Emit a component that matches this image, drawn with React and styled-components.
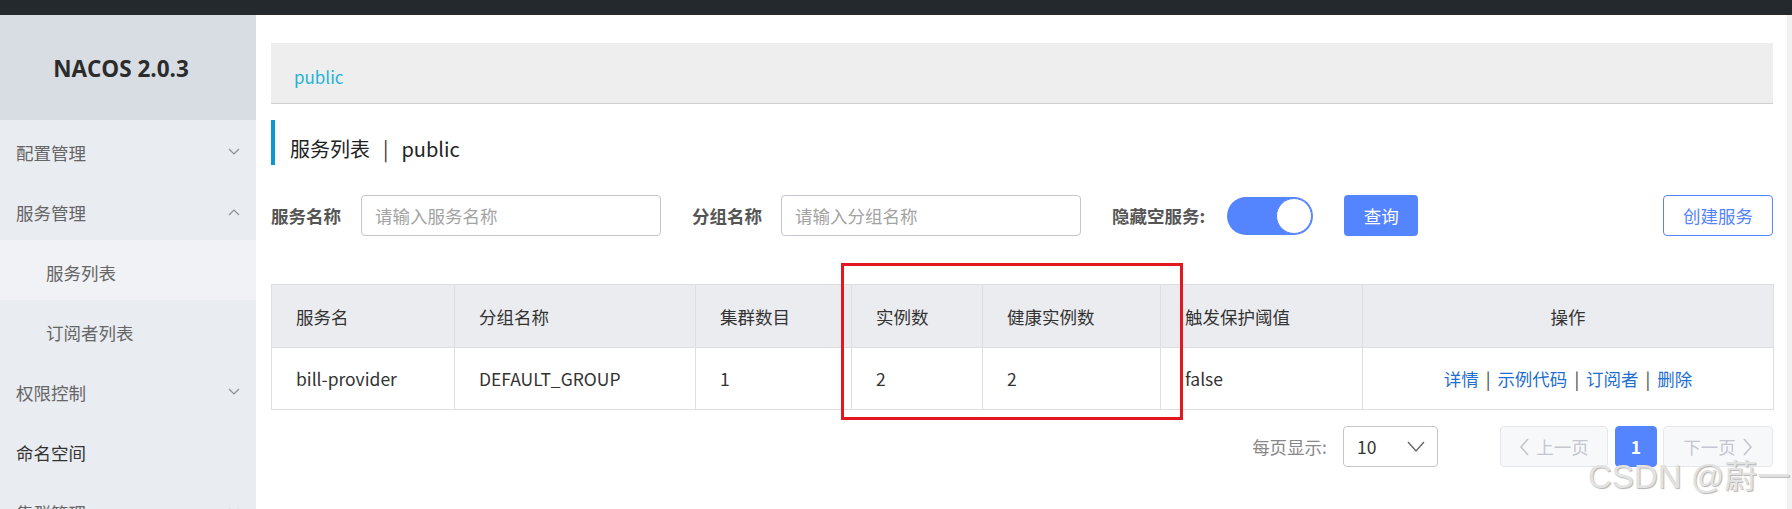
import React from "react";
import styled, { createGlobalStyle } from "styled-components";

const GlobalStyle = createGlobalStyle`
  html, body {
    margin: 0;
    padding: 0;
    background: #fff;
  }
  body {
    font-family: "Noto Sans CJK SC", "Noto Sans", sans-serif;
    font-size: 17.5px;
    color: #333;
  }
  * {
    box-sizing: border-box;
  }
`;

const menu = [
  { label: "配置管理", arrow: "down" },
  { label: "服务管理", arrow: "up" },
  { label: "服务列表", sub: true, active: true },
  { label: "订阅者列表", sub: true },
  { label: "权限控制", arrow: "down" },
  { label: "命名空间", dark: true },
  { label: "集群管理", arrow: "down" },
];

const columns = [
  { title: "服务名", width: 183 },
  { title: "分组名称", width: 241 },
  { title: "集群数目", width: 156 },
  { title: "实例数", width: 131 },
  { title: "健康实例数", width: 178 },
  { title: "触发保护阈值", width: 202 },
  { title: "操作", width: 411, center: true },
];

const actions = ["详情", "示例代码", "订阅者", "删除"];

function Chevron({ dir }) {
  const points = dir === "up" ? "1,7 6,2 11,7" : "1,1 6,6 11,1";
  return (
    <svg width="12" height="8" viewBox="0 0 12 8">
      <polyline points={points} fill="none" stroke="#8a8f99" strokeWidth="1.2" />
    </svg>
  );
}

function Arrow({ dir, color }) {
  const points = dir === "left" ? "9,1 2,9 9,17" : "2,1 9,9 2,17";
  return (
    <svg width="11" height="18" viewBox="0 0 11 18">
      <polyline points={points} fill="none" stroke={color} strokeWidth="1.6" />
    </svg>
  );
}

export default function App() {
  return (
    <Page>
      <GlobalStyle />
      <TopBar />
      <Body>
        <Sidebar>
          <Logo>NACOS 2.0.3</Logo>
          {menu.map((m) => (
            <MenuItem key={m.label} $sub={m.sub} $active={m.active} $dark={m.dark}>
              <span>{m.label}</span>
              {m.arrow && <Chevron dir={m.arrow} />}
            </MenuItem>
          ))}
        </Sidebar>

        <Main>
          <NamespaceBar>
            <NamespaceLink>public</NamespaceLink>
          </NamespaceBar>

          <Title>
            服务列表<Divider>|</Divider>public
          </Title>

          <FilterRow>
            <FieldLabel>服务名称</FieldLabel>
            <Input placeholder="请输入服务名称" $gap={20} />
            <FieldLabel $gap={31}>分组名称</FieldLabel>
            <Input placeholder="请输入分组名称" $gap={19} />
            <FieldLabel $gap={31}>隐藏空服务:</FieldLabel>
            <Switch>
              <Knob />
            </Switch>
            <PrimaryButton>查询</PrimaryButton>
            <Spacer />
            <OutlineButton>创建服务</OutlineButton>
          </FilterRow>

          <Table>
            <colgroup>
              {columns.map((c) => (
                <col key={c.title} style={{ width: c.width }} />
              ))}
            </colgroup>
            <thead>
              <tr>
                {columns.map((c) => (
                  <Th key={c.title} $center={c.center}>
                    {c.title}
                  </Th>
                ))}
              </tr>
            </thead>
            <tbody>
              <tr>
                <Td>bill-provider</Td>
                <Td>DEFAULT_GROUP</Td>
                <Td>1</Td>
                <Td>2</Td>
                <Td>2</Td>
                <Td>false</Td>
                <Td $center>
                  {actions.map((a, i) => (
                    <React.Fragment key={a}>
                      {i > 0 && <Sep>|</Sep>}
                      <ActionLink>{a}</ActionLink>
                    </React.Fragment>
                  ))}
                </Td>
              </tr>
            </tbody>
          </Table>

          <Pagination>
            <PageSizeLabel>每页显示:</PageSizeLabel>
            <Select>
              <span>10</span>
              <svg width="18" height="12" viewBox="0 0 18 12">
                <polyline points="1,1 9,10 17,1" fill="none" stroke="#666" strokeWidth="1.4" />
              </svg>
            </Select>
            <PageButton $width={108} $gap={62} disabled>
              <Arrow dir="left" color="#c4c6cf" />
              上一页
            </PageButton>
            <PageButton $width={42} $gap={7} $current>
              1
            </PageButton>
            <PageButton $width={110} $gap={6} disabled>
              下一页
              <Arrow dir="right" color="#c4c6cf" />
            </PageButton>
          </Pagination>
        </Main>
        <Scrollbar />
      </Body>

      <Highlight />
      <Watermark>CSDN @蔚一</Watermark>
    </Page>
  );
}

const Page = styled.div`
  position: relative;
  width: 1792px;
  height: 509px;
  overflow: hidden;
  display: flex;
  flex-direction: column;
`;

const TopBar = styled.div`
  height: 15px;
  background: #24292e;
  flex-shrink: 0;
`;

const Body = styled.div`
  flex: 1;
  display: flex;
  min-height: 0;
`;

const Sidebar = styled.aside`
  width: 256px;
  flex-shrink: 0;
  background: #e9ecf1;
  display: flex;
  flex-direction: column;
`;

const Logo = styled.div`
  height: 105px;
  background: #d8dde4;
  display: flex;
  align-items: center;
  justify-content: center;
  padding-right: 14px;
  padding-top: 2px;
  font-family: "Open Sans", "Noto Sans", sans-serif;
  font-weight: 700;
  font-size: 22.5px;
  color: #2b2b2b;
  flex-shrink: 0;
`;

const MenuItem = styled.div`
  height: 60px;
  flex-shrink: 0;
  display: flex;
  align-items: center;
  justify-content: space-between;
  padding: 4px 16px 0 ${(p) => (p.$sub ? "46px" : "16px")};
  background: ${(p) => (p.$active ? "#f0f2f5" : "transparent")};
  color: ${(p) => (p.$dark ? "#333" : "#666")};
  font-size: 17.5px;
`;

const Main = styled.main`
  flex: 1;
  min-width: 0;
  padding: 28px 14px 0 15px;
  display: flex;
  flex-direction: column;
`;

const Scrollbar = styled.div`
  width: 5px;
  flex-shrink: 0;
  background: #f1f1f1;
`;

const NamespaceBar = styled.div`
  height: 61px;
  background: #eeeeee;
  border-bottom: 1px solid #cfcfcf;
  display: flex;
  align-items: center;
  padding: 6px 0 0 23px;
`;

const NamespaceLink = styled.span`
  color: #1fb3d6;
  font-size: 17px;
`;

const Title = styled.div`
  margin-top: 16px;
  height: 45px;
  border-left: 4px solid #0b97d0;
  padding: 0 0 2px 15px;
  display: flex;
  align-items: flex-end;
  font-size: 20px;
  line-height: 28px;
  color: #222;
`;

const Divider = styled.span`
  margin: 0 13px;
  color: #333;
`;

const FilterRow = styled.div`
  margin-top: 30px;
  height: 41px;
  display: flex;
  align-items: center;
`;

const FieldLabel = styled.label`
  margin-left: ${(p) => p.$gap || 0}px;
  font-weight: 700;
  font-size: 17.5px;
  color: #555;
  white-space: nowrap;
`;

const Input = styled.input`
  margin-left: ${(p) => p.$gap || 0}px;
  width: 300px;
  height: 41px;
  border: 1px solid #c4c6cf;
  border-radius: 4px;
  padding: 0 13px;
  font-family: inherit;
  font-size: 17.5px;
  outline: none;
  &::placeholder {
    color: #a3a3a3;
  }
`;

const Switch = styled.div`
  margin-left: 22px;
  width: 86px;
  height: 38px;
  border-radius: 19px;
  background: #5584ff;
  display: flex;
  align-items: center;
  justify-content: flex-end;
  flex-shrink: 0;
`;

const Knob = styled.div`
  width: 36px;
  height: 36px;
  margin-right: 1px;
  border-radius: 50%;
  background: #fff;
  border: 1px solid #5584ff;
`;

const PrimaryButton = styled.button`
  margin-left: 31px;
  width: 74px;
  height: 41px;
  border: none;
  border-radius: 4px;
  background: #5584ff;
  color: #fff;
  font-family: inherit;
  font-size: 17.5px;
`;

const Spacer = styled.div`
  flex: 1;
`;

const OutlineButton = styled.button`
  width: 110px;
  height: 41px;
  border: 1px solid #5584ff;
  border-radius: 4px;
  background: #fff;
  color: #5584ff;
  font-family: inherit;
  font-size: 17.5px;
`;

const Table = styled.table`
  margin-top: 48px;
  width: 1502px;
  table-layout: fixed;
  border-collapse: collapse;
  border: 1px solid #dcdee3;
`;

const Th = styled.th`
  height: 63px;
  background: #ebecf0;
  border: 1px solid #dcdee3;
  padding: 0 24px;
  font-weight: 400;
  font-size: 17.5px;
  color: #333;
  text-align: ${(p) => (p.$center ? "center" : "left")};
`;

const Td = styled.td`
  height: 62px;
  border: 1px solid #dcdee3;
  padding: 0 24px;
  font-size: 17.5px;
  color: #333;
  text-align: ${(p) => (p.$center ? "center" : "left")};
`;

const ActionLink = styled.a`
  color: #1f6fd1;
  cursor: pointer;
`;

const Sep = styled.span`
  margin: 0 7px;
  color: #444;
`;

const Pagination = styled.div`
  margin-top: 16px;
  height: 41px;
  display: flex;
  align-items: center;
  justify-content: flex-end;
`;

const PageSizeLabel = styled.span`
  color: #888;
  font-size: 17.5px;
  margin-right: 16px;
`;

const Select = styled.div`
  width: 95px;
  height: 41px;
  border: 1px solid #c4c6cf;
  border-radius: 4px;
  display: flex;
  align-items: center;
  justify-content: space-between;
  padding: 0 12px 0 13px;
  font-size: 17.5px;
  color: #333;
`;

const PageButton = styled.button`
  margin-left: ${(p) => p.$gap}px;
  width: ${(p) => p.$width}px;
  height: 41px;
  border-radius: 4px;
  display: flex;
  align-items: center;
  justify-content: center;
  gap: 6px;
  font-family: inherit;
  font-size: 17.5px;
  font-weight: ${(p) => (p.$current ? 700 : 400)};
  border: 1px solid ${(p) => (p.$current ? "#5584ff" : "#e6e7eb")};
  background: ${(p) => (p.$current ? "#5584ff" : "#f7f8fa")};
  color: ${(p) => (p.$current ? "#fff" : "#c4c6cf")};
`;

const Highlight = styled.div`
  position: absolute;
  left: 841px;
  top: 263px;
  width: 342px;
  height: 157px;
  border: 3px solid #e3171f;
  pointer-events: none;
`;

const Watermark = styled.div`
  position: absolute;
  left: 1588px;
  top: 460px;
  font-family: "Liberation Sans", "Noto Sans CJK SC", sans-serif;
  font-size: 33px;
  line-height: 1;
  color: #e2e2e2;
  text-shadow: 1px 1px 1px rgba(0, 0, 0, 0.3);
  white-space: nowrap;
  pointer-events: none;
`;
